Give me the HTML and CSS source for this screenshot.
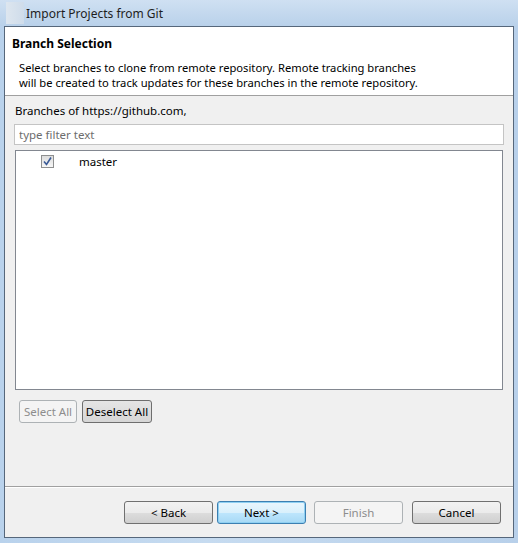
FILE: index.html
```html
<!DOCTYPE html>
<html lang="en">
<head>
  <meta charset="UTF-8">
  <title>Import Projects from Git</title>
  <meta name="viewport" content="width=device-width, initial-scale=1.0">
  <link rel="stylesheet" href="styles.css">
</head>
<body>
  <div class="window">
    <div class="titlebar">
      <span class="titlebar-icon"></span>
      <span class="title">Import Projects from Git</span>
    </div>

    <div class="client">
      <!-- Bandeau d'en-tête -->
      <div class="header">
        <div class="header-title">Branch Selection</div>
        <div class="header-desc">
          Select branches to clone from remote repository. Remote tracking branches<br>
          will be created to track updates for these branches in the remote repository.
        </div>
      </div>

      <div class="content">
        <div class="label">Branches of https://github.com,</div>
        <input class="filter" type="text" placeholder="type filter text">

        <div class="branch-list">
          <div class="branch-row">
            <span class="checkbox">
              <svg width="11" height="11" viewBox="0 0 11 11">
                <path d="M2 5.5 L4.5 8.5 L9 1.5" fill="none" stroke="#3a5a96" stroke-width="1.6"/>
              </svg>
            </span>
            <span class="branch-name">master</span>
          </div>
        </div>

        <div class="select-row">
          <button class="btn small select-all" disabled>Select All</button>
          <button class="btn small pressed">Deselect All</button>
        </div>
      </div>

      <div class="button-bar">
        <button class="btn wide">&lt; Back</button>
        <button class="btn wide next default">Next &gt;</button>
        <button class="btn wide finish" disabled>Finish</button>
        <button class="btn wide cancel">Cancel</button>
      </div>
    </div>
  </div>
</body>
</html>
```

FILE: styles.css
```css
html, body {
  margin: 0;
  padding: 0;
  width: 518px;
  height: 543px;
  overflow: hidden;
  font-family: 'Noto Sans', 'Open Sans', sans-serif;
  font-size: 11.5px;
  color: #000;
}

.window {
  width: 518px;
  height: 543px;
  background: linear-gradient(to right, #b9d2ec, #c6dbf0 40%, #b8d0ea);
  display: flex;
  flex-direction: column;
  box-sizing: border-box;
  padding: 0 4px 5px 4px;
}

.titlebar {
  height: 26px;
  display: flex;
  align-items: center;
  background: linear-gradient(to bottom, #cfe0f2, #b9d1ea);
  margin: 0 -4px;
  padding-left: 6px;
}

.titlebar-icon {
  width: 18px;
  height: 22px;
  background: linear-gradient(to right, #dde6ef, #cfdcea);
  margin-right: 2px;
}

.title {
  font-size: 12px;
  color: #1e1e1e;
}

.client {
  flex: 1;
  display: flex;
  flex-direction: column;
  border: 1px solid #56677b;
  background-color: #f0f0f0;
}

.header {
  height: 69px;
  background-color: #fff;
  border-bottom: 1px solid #a0a0a0;
  box-sizing: border-box;
  padding: 9px 0 0 7px;
}

.header-title {
  font-weight: bold;
  font-size: 12px;
  line-height: 16px;
}

.header-desc {
  margin-top: 8px;
  margin-left: 7px;
  line-height: 15px;
  font-size: 11.2px;
}

.content {
  flex: 1;
  display: flex;
  flex-direction: column;
  padding: 7px 9px 0 9px;
  border-bottom: 1px solid #a0a0a0;
}

.label {
  margin-left: 1px;
  line-height: 16px;
}

.filter {
  margin-top: 5px;
  height: 21px;
  box-sizing: border-box;
  border: 1px solid #c4c4c4;
  padding: 0 4px;
  font-family: inherit;
  font-size: 11.5px;
  outline: none;
}

.filter::placeholder {
  color: #6d6d6d;
}

.branch-list {
  margin: 5px 1px 0 1px;
  height: 240px;
  box-sizing: border-box;
  background-color: #fff;
  border: 1px solid #828790;
  padding: 3px 0 0 25px;
}

.branch-row {
  display: flex;
  align-items: center;
  height: 14px;
}

.checkbox {
  width: 11px;
  height: 11px;
  border: 1px solid #8e8f8f;
  background: linear-gradient(to bottom, #dcdcdc, #f7f7f7);
  display: flex;
  align-items: center;
  justify-content: center;
}

.branch-name {
  margin-left: 25px;
}

.select-row {
  display: flex;
  gap: 5px;
  margin-top: 10px;
  padding-left: 5px;
}

.btn {
  height: 23px;
  box-sizing: border-box;
  font-family: inherit;
  font-size: 11.5px;
  color: #000;
  white-space: nowrap;
  border: 1px solid #707070;
  border-radius: 3px;
  background: linear-gradient(to bottom, #f2f2f2 0%, #ebebeb 50%, #dddddd 51%, #cfcfcf 100%);
  padding: 0;
}

.btn:disabled {
  color: #8d8d8d;
  border-color: #adb2b5;
  background: #f4f4f4;
}

.select-all {
  width: 58px;
}

.pressed {
  width: 70px;
  background: linear-gradient(to bottom, #e5e5e5, #d6d6d6);
  border-color: #6e6e6e;
}

.button-bar {
  height: 50px;
  display: flex;
  align-items: flex-start;
  justify-content: flex-end;
  padding: 13px 12px 0 0;
  box-sizing: border-box;
  border-top: 1px solid #fff;
}

.wide {
  width: 89px;
}

.button-bar .next {
  margin-left: 4px;
}

.button-bar .finish {
  margin-left: 8px;
}

.button-bar .cancel {
  margin-left: 9px;
}

.default {
  border-color: #3c7fb1;
  background: linear-gradient(to bottom, #eaf6fd 0%, #d9f0fc 50%, #bee6fd 51%, #a7d9f5 100%);
  box-shadow: inset 0 0 0 1px #8fd0f2;
}
```
